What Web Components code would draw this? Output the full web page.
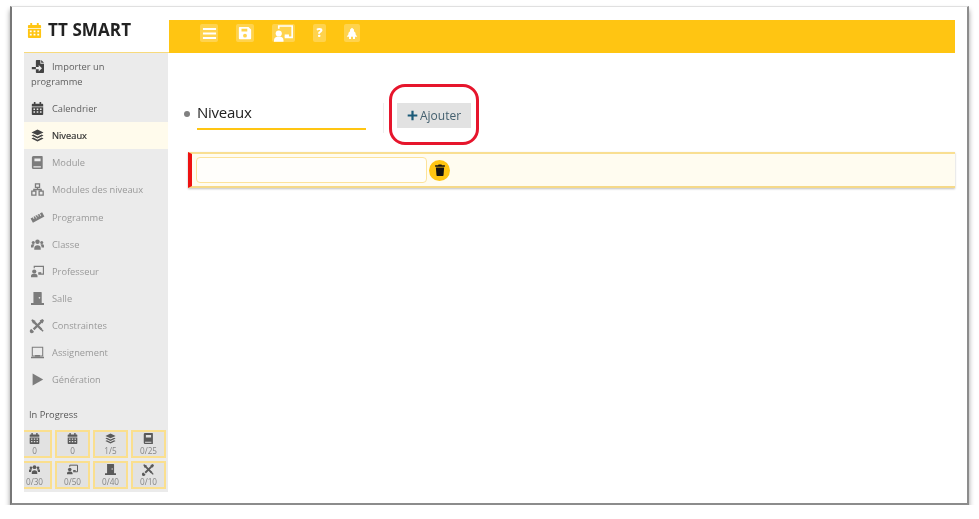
<!DOCTYPE html>
<html lang="fr">
<head>
<meta charset="utf-8">
<title>TT SMART</title>
<style>
  html, body { margin: 0; padding: 0; background: #fff; }
  body { font-family: "Open Sans", "Liberation Sans", sans-serif; }
</style>
</head>
<body>
<tt-frame>
  <tt-sidebar slot="side">
    <tt-nav-item icon="import" state="on">Importer un programme</tt-nav-item>
    <tt-nav-item icon="calendar" state="on">Calendrier</tt-nav-item>
    <tt-nav-item icon="layers" state="active">Niveaux</tt-nav-item>
    <tt-nav-item icon="book">Module</tt-nav-item>
    <tt-nav-item icon="sitemap">Modules des niveaux</tt-nav-item>
    <tt-nav-item icon="ruler">Programme</tt-nav-item>
    <tt-nav-item icon="users">Classe</tt-nav-item>
    <tt-nav-item icon="teacher">Professeur</tt-nav-item>
    <tt-nav-item icon="door">Salle</tt-nav-item>
    <tt-nav-item icon="tools">Constraintes</tt-nav-item>
    <tt-nav-item icon="laptop">Assignement</tt-nav-item>
    <tt-nav-item icon="play">Génération</tt-nav-item>
    <tt-progress slot="progress">
      <tt-tile icon="calendar">0</tt-tile>
      <tt-tile icon="calendar">0</tt-tile>
      <tt-tile icon="layers">1/5</tt-tile>
      <tt-tile icon="book">0/25</tt-tile>
      <tt-tile icon="users">0/30</tt-tile>
      <tt-tile icon="teacher">0/50</tt-tile>
      <tt-tile icon="door">0/40</tt-tile>
      <tt-tile icon="tools">0/10</tt-tile>
    </tt-progress>
  </tt-sidebar>
  <tt-topbar slot="top"></tt-topbar>
  <tt-title-row>
    <tt-heading>Niveaux</tt-heading>
    <tt-add-button>Ajouter</tt-add-button>
  </tt-title-row>
  <tt-level-row></tt-level-row>
</tt-frame>

<script>
// all icons on a 16x16 box, filled with the current colour
const ICONS = {
  calendar: '<path fill-rule="evenodd" d="M3.5 0h2v2h5V0h2v2H14a1 1 0 0 1 1 1v2.5H1V3a1 1 0 0 1 1-1h1.5zM1 6.5h14V15a1 1 0 0 1-1 1H2a1 1 0 0 1-1-1zM3 8v1.8h2V8zm4 0v1.8h2V8zm4 0v1.8h2V8zM3 11.5v1.8h2v-1.8zm4 0v1.8h2v-1.8zm4 0v1.8h2v-1.8z"/>',
  import: '<path d="M7 0h4.500v4.500H16V15a1 1 0 0 1-1 1H7a1 1 0 0 1-1-1v-3.500h3.500V14l4-4-4-4v2.500H6V1a1 1 0 0 1 1-1zM12.500 0 16 3.500h-3.500zM1 8.500h5v3H1z"/>',
  layers: '<path d="M8 .6l7.400 3.600L8 7.800.6 4.200zM2.800 6.800 8 9.400l5.200-2.600L15.400 8 8 11.600.6 8zM2.800 10.600 8 13.200l5.200-2.600 2.200 1.200L8 15.400.6 11.800z"/>',
  book: '<path fill-rule="evenodd" d="M3 0h10.500a.9.9 0 0 1 .9.9v14.200a.9.9 0 0 1-.9.9H3a1.900 1.900 0 0 1-1.900-1.900V1.900A1.900 1.900 0 0 1 3 0zm1.200 3v3.500h7.600V3zM3 12.600v1.600h9.200v-1.600z"/>',
  sitemap: '<path fill="none" stroke="currentColor" stroke-width="1.600" d="M5.500 1h5v4.500h-5zM1 10h5v5H1zM10 10h5v5h-5zM8 5.500V8M3.500 10V8h9v2"/>',
  ruler: '<g transform="rotate(-28 8 8)"><path fill-rule="evenodd" d="M0 5h16v6H0zM3 5v2.400h1V5zm3 0v3.400h1V5zm3 0v2.400h1V5zm3 0v3.400h1V5z"/></g>',
  users: '<circle cx="8" cy="4.600" r="2.800"/><circle cx="2.800" cy="5.600" r="1.900"/><circle cx="13.200" cy="5.600" r="1.900"/><path d="M4 13a4 4 0 0 1 8 0v1.400H4zM0 9.600c0-1 .8-1.800 1.800-1.800h1.500c.4 0 .7.1 1 .3A5 5 0 0 0 3 11.800H0zM16 9.600c0-1-.8-1.800-1.800-1.800h-1.500c-.4 0-.7.1-1 .3a5 5 0 0 1 1.300 3.700H16z"/>',
  teacher: '<path fill="none" stroke="currentColor" stroke-width="1.400" d="M4 4V1.700h11.300v9.600H9"/><path d="M9 8.800h3.600v2.200H9z"/><circle cx="4" cy="8" r="2.600"/><path d="M0 13.600c0-1.600 1.300-2.800 2.800-2.800h2.400c1.600 0 2.800 1.200 2.800 2.800V15H0z"/>',
  door: '<path fill-rule="evenodd" d="M3 0h9.600a.6.6 0 0 1 .6.6V13.500H3zm7.400 6.200a1 1 0 1 0 0 2 1 1 0 0 0 0-2zM0 13.500h16V16H0z"/>',
  tools: '<path fill="none" stroke="currentColor" stroke-width="2.800" d="M3.500 3.500l9.400 9.400M13 3 3.200 12.800"/><path d="M.4 1.600 1.600.4l4.200 2.200-3.200 3.200zM10.600 1.800 14.200 0 16 1.800l-1.800 3.600zM.6 12.400a2.600 2.600 0 1 0 3 3zM11.600 10.400l4 4-1.400 1.400-4-4z"/>',
  laptop: '<path fill="none" stroke="currentColor" stroke-width="1.300" d="M1.600 1.600h12.800v10.600H1.600z"/><path d="M0 13.200h16V15H0zM5 11h6v2H5z"/>',
  play: '<path d="M2 0.600 15 8 2 15.400z"/>',
  bars: '<path d="M1 2.200h14v2H1zM1 7h14v2H1zM1 11.800h14v2H1z"/>',
  save: '<path fill-rule="evenodd" d="M2 1h10l3 3v10a1 1 0 0 1-1 1H2a1 1 0 0 1-1-1V2a1 1 0 0 1 1-1zm2 2v3.400h6.600V3zm4 5.800a2.200 2.200 0 1 0 0 4.400 2.200 2.200 0 0 0 0-4.400z"/>',
  home: '<path d="M8 1l2.600 2.400v2.200l3 2.900H12l3 4.500h-3V16H9.300v-3H6.700v3H4v-3H1l3-4.500H2.400l3-2.900V3.400z"/>',
  trash: '<path d="M1.500 1.800h4L6 .8h4l.5 1h4v1.700h-13zM2.500 4.800h11l-.8 10.200a1 1 0 0 1-1 1H4.300a1 1 0 0 1-1-1z"/>',
  plus: '<path d="M6.400 1h3.200v5.400H15v3.200H9.600V15H6.400V9.600H1V6.400h5.400z"/>'
};

class TtIcon extends HTMLElement {
  constructor() {
    super();
    this.attachShadow({ mode: 'open' })
  }

  connectedCallback() {
    const size = this.getAttribute('size') || 13;
    this.shadowRoot.innerHTML = `
    <style>
      :host{
        display:inline-block;
        width:${size}px;
        height:${size}px;
        line-height:0;
      }
      svg{ width:100%; height:100%; fill:currentColor; display:block; overflow:visible; }
    </style>
    <svg viewBox="0 0 16 16">${ICONS[this.getAttribute('name')] || ''}</svg>`
  }
}
customElements.define('tt-icon', TtIcon);

class TtFrame extends HTMLElement {
  constructor() {
    super();
    this.attachShadow({ mode: 'open' })
  }

  connectedCallback() {
    this.shadowRoot.innerHTML = `
    <style>
      :host{
        display:block;
        box-sizing:border-box;
        width:959px;
        height:499px;
        margin:6px 0 0 10px;
        padding:13px 12px 0 12px;
        background:#fff;
        border-top:1px solid #e0e0e0;
        border-left:2px solid #777;
        border-right:2px solid #8c8c8c;
        border-bottom:2px solid #8c8c8c;
        box-shadow:0 4px 5px rgba(0,0,0,.4);
        filter:blur(.35px);
      }
      .cols{ display:flex; flex-direction:row; }
      .main{ width:786px; }
    </style>
    <div class="cols">
      <slot name="side"></slot>
      <div class="main">
        <slot name="top"></slot>
        <slot></slot>
      </div>
    </div>`
  }
}
customElements.define('tt-frame', TtFrame);

class TtSidebar extends HTMLElement {
  constructor() {
    super();
    this.attachShadow({ mode: 'open' })
  }

  connectedCallback() {
    this.shadowRoot.innerHTML = `
    <style>
      :host{
        display:block;
        width:145px;
        flex:none;
        color:#333;
      }
      .brand{
        height:32px;
        border-bottom:1px solid #f7da7c;
        display:flex;
        flex-direction:row;
        align-items:flex-start;
        padding-left:3px;
      }
      .brand tt-icon{ color:#ffc512; margin:3px 6px 0 0; }
      .brand span{
        font-size:17px;
        line-height:20px;
        font-weight:700;
        color:#222;
        letter-spacing:.1px;
        white-space:nowrap;
      }
      .body{
        background:#ebebeb;
        width:144px;
        height:439px;
        overflow:hidden;
      }
      .label{
        margin:14px 0 0 5px;
        height:15px;
        line-height:15px;
        font-size:9.3px;
        color:#555;
      }
    </style>
    <div class="brand"><tt-icon name="calendar" size="15"></tt-icon><span>TT SMART</span></div>
    <div class="body">
      <slot></slot>
      <div class="label">In Progress</div>
      <slot name="progress"></slot>
    </div>`
  }
}
customElements.define('tt-sidebar', TtSidebar);

class TtNavItem extends HTMLElement {
  constructor() {
    super();
    this.attachShadow({ mode: 'open' })
  }

  connectedCallback() {
    this.shadowRoot.innerHTML = `
    <style>
      :host{
        display:block;
        padding:6px 24px 6px 7px;
        line-height:15.1px;
        font-size:9.3px;
        color:#999;
      }
      :host([state="on"]){ color:#606060; }
      :host([state="active"]){ color:#333; background:#fffbec; -webkit-text-stroke:.2px #333; }
      tt-icon{ margin-right:8px; vertical-align:-3px; color:#7c7c7c; }
      :host([state="on"]) tt-icon{ color:#444; }
      :host([state="active"]) tt-icon{ color:#444; }
    </style>
    <tt-icon name="${this.getAttribute('icon')}" size="13"></tt-icon><slot></slot>`
  }
}
customElements.define('tt-nav-item', TtNavItem);

class TtProgress extends HTMLElement {
  constructor() {
    super();
    this.attachShadow({ mode: 'open' })
  }

  connectedCallback() {
    this.shadowRoot.innerHTML = `
    <style>
      :host{
        display:grid;
        grid-template-columns:repeat(4, 35px);
        grid-auto-rows:28px;
        gap:3px;
        margin:8px 0 0 -7px;
      }
    </style>
    <slot></slot>`
  }
}
customElements.define('tt-progress', TtProgress);

class TtTile extends HTMLElement {
  constructor() {
    super();
    this.attachShadow({ mode: 'open' })
  }

  connectedCallback() {
    this.shadowRoot.innerHTML = `
    <style>
      :host{
        display:flex;
        flex-direction:column;
        align-items:center;
        box-sizing:border-box;
        background:#e2e2e2;
        border:2px solid #fadf8e;
        padding-top:1px;
        font-size:8.2px;
        line-height:11px;
        color:#858585;
      }
      tt-icon{ color:#5a5a5a; margin-bottom:1px; flex:none; }
    </style>
    <tt-icon name="${this.getAttribute('icon')}" size="11"></tt-icon><slot></slot>`
  }
}
customElements.define('tt-tile', TtTile);

class TtTopbar extends HTMLElement {
  constructor() {
    super();
    this.attachShadow({ mode: 'open' })
  }

  connectedCallback() {
    this.shadowRoot.innerHTML = `
    <style>
      :host{
        display:flex;
        flex-direction:row;
        align-items:flex-start;
        height:33px;
        background:#ffc512;
        padding:4px 0 0 31px;
        box-sizing:border-box;
        color:#fff;
      }
      .b{
        height:18px;
        background:rgba(255,255,255,.25);
        border-radius:2px;
        display:flex;
        align-items:center;
        justify-content:center;
      }
      .q{ font-family:"Open Sans", sans-serif; font-weight:800; font-size:12px; line-height:18px; }
    </style>
    <div class="b" style="width:18px"><tt-icon name="bars" size="15"></tt-icon></div>
    <div class="b" style="width:18px;margin-left:18px"><tt-icon name="save" size="14"></tt-icon></div>
    <div class="b" style="width:23px;margin-left:18px"><tt-icon name="teacher" size="19"></tt-icon></div>
    <div class="b q" style="width:13px;margin-left:18px">?</div>
    <div class="b" style="width:16px;margin-left:18px"><tt-icon name="home" size="12"></tt-icon></div>`
  }
}
customElements.define('tt-topbar', TtTopbar);

class TtTitleRow extends HTMLElement {
  constructor() {
    super();
    this.attachShadow({ mode: 'open' })
  }

  connectedCallback() {
    this.shadowRoot.innerHTML = `
    <style>
      :host{
        display:flex;
        flex-direction:row;
        align-items:flex-start;
        padding:31px 0 0 28px;
      }
      .sep{
        width:1px;
        height:30px;
        margin:19px 0 0 17px;
        background:#eee;
      }
    </style>
    <slot name="head"></slot><div class="sep"></div><slot></slot>`;
    // heading goes before the thin separator, button after it
    this.querySelector('tt-heading').slot = 'head';
  }
}
customElements.define('tt-title-row', TtTitleRow);

class TtHeading extends HTMLElement {
  constructor() {
    super();
    this.attachShadow({ mode: 'open' })
  }

  connectedCallback() {
    this.shadowRoot.innerHTML = `
    <style>
      :host{
        display:block;
        position:relative;
        box-sizing:border-box;
        width:169px;
        height:28px;
        margin-top:18px;
        border-bottom:2px solid #ffc512;
        font-size:15px;
        letter-spacing:-.25px;
        line-height:21px;
        color:#222;
      }
      .dot{
        position:absolute;
        left:-13px;
        top:9px;
        width:6px;
        height:6px;
        border-radius:50%;
        background:#808080;
      }
    </style>
    <span class="dot"></span><slot></slot>`
  }
}
customElements.define('tt-heading', TtHeading);

class TtAddButton extends HTMLElement {
  constructor() {
    super();
    this.attachShadow({ mode: 'open' })
  }

  connectedCallback() {
    this.shadowRoot.innerHTML = `
    <style>
      :host{
        display:block;
        margin-left:5px;
        padding:16px 5px 14px 5px;
        border:3px solid #e6152c;
        border-radius:16px;
      }
      .btn{
        width:74px;
        height:25px;
        background:#e2e2e2;
        color:#44606f;
        display:flex;
        flex-direction:row;
        align-items:center;
        justify-content:center;
        font-size:12px;
      }
      tt-icon{ color:#1b5a78; margin-right:2px; }
    </style>
    <div class="btn"><tt-icon name="plus" size="11"></tt-icon><slot></slot></div>`
  }
}
customElements.define('tt-add-button', TtAddButton);

class TtLevelRow extends HTMLElement {
  constructor() {
    super();
    this.attachShadow({ mode: 'open' })
  }

  connectedCallback() {
    this.shadowRoot.innerHTML = `
    <style>
      :host{
        display:flex;
        flex-direction:row;
        align-items:center;
        box-sizing:border-box;
        height:36px;
        margin:7px 0 0 19px;
        padding-left:4px;
        background:#fffcf0;
        border-top:2px solid #f9df92;
        border-bottom:2px solid #f5d989;
        border-left:4px solid #ee1111;
        box-shadow:0 1px 2px rgba(0,0,0,.25);
      }
      input{
        box-sizing:border-box;
        width:231px;
        height:26px;
        background:#fffefb;
        border:1.500px solid #fde39a;
        border-radius:4px;
        outline:none;
      }
      .del{
        width:21px;
        height:21px;
        margin-left:2px;
        border-radius:50%;
        background:#ffc512;
        color:#111;
        display:flex;
        align-items:center;
        justify-content:center;
      }
    </style>
    <input type="text">
    <div class="del"><tt-icon name="trash" size="12"></tt-icon></div>`
  }
}
customElements.define('tt-level-row', TtLevelRow);
</script>
</body>
</html>
